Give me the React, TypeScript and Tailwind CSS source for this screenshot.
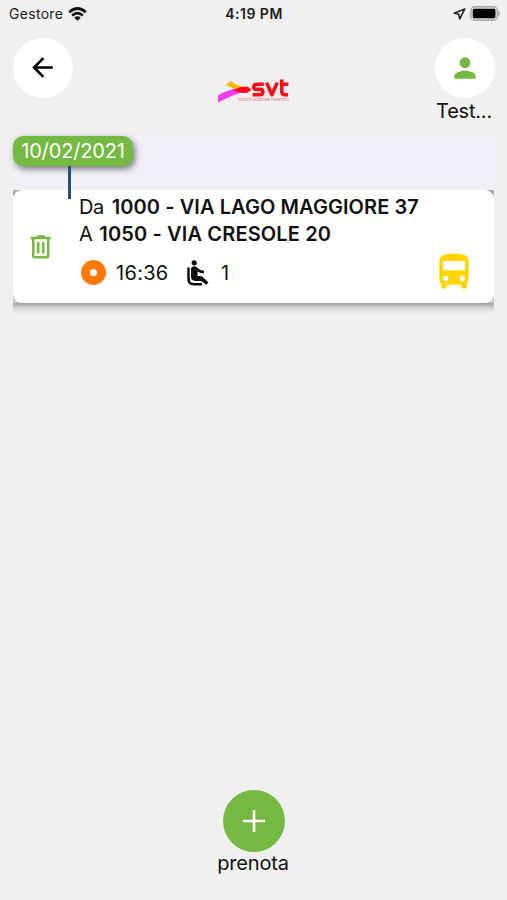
import type { ReactNode } from "react";
import { MdArrowBack, MdDirectionsBus, MdPerson } from "react-icons/md";

function WifiIcon() {
  return (
    <svg className="ml-[5px] h-[14px] w-[19px]" viewBox="0 0 19 14" fill="none" stroke="#111" strokeWidth="2.7">
      <path d="M1.2 5.3Q9.5-2.3 17.8 5.3" />
      <path d="M4.1 8.6Q9.5 3.8 14.9 8.6" />
      <path d="M6.2 10.7Q9.5 8 12.8 10.7L9.5 13.8Z" fill="#111" stroke="none" />
    </svg>
  );
}

function LocationIcon() {
  return (
    <svg className="h-[12px] w-[13px]" viewBox="0 0 13 12" fill="none" stroke="#222" strokeWidth="1.6" strokeLinejoin="round">
      <path d="M11.8 1L1.2 5.2L5.8 6.3L6.7 10.9Z" />
    </svg>
  );
}

function BatteryIcon() {
  return (
    <svg className="ml-[4px] h-[15px] w-[31px]" viewBox="0 0 31 15">
      <rect x="0.8" y="0.8" width="26.6" height="13.4" rx="4" fill="#dcdcdc" stroke="#a9a9a9" strokeWidth="1.4" />
      <rect x="2.8" y="2.8" width="22.6" height="9.4" rx="1.6" fill="#000" />
      <path d="M28.4 4.4Q31.4 7.5 28.4 10.6Z" fill="#a3a3a3" />
    </svg>
  );
}

function StatusBar() {
  return (
    <div className="grid h-7 grid-cols-3 items-center pb-px pl-[9px] pr-[6px] text-[14px] text-[#1c1c1c]">
      <div className="flex items-center">
        <span className="tracking-[0.3px]">Gestore</span>
        <WifiIcon />
      </div>
      <div className="mr-[2px] text-center text-[14px] font-semibold tracking-[0.5px]">4:19 PM</div>
      <div className="flex items-center justify-end">
        <LocationIcon />
        <BatteryIcon />
      </div>
    </div>
  );
}

function Logo() {
  return (
    <svg className="mt-[51px] h-[26px] w-[74px] overflow-visible" viewBox="0 0 74 26">
      <path d="M1 16.5Q10 10.5 23 9L31 12Q19 14 1 23.5Z" fill="#f43cf4" />
      <path d="M8.5 6L14 2Q19 7 29 8L27 13Q17 10 8.5 6Z" fill="#ffb60a" />
      <path d="M16 11Q23 7.5 30 7.6Q33.5 8.7 34.4 11Q31 14.6 25 14Q20 13 16 11Z" fill="#fb0d1b" />
      <g fill="none" stroke="#fb0d1b" strokeWidth="3.6" strokeLinejoin="round">
        <path d="M46.8 5.2H39.9Q36.8 5.2 36.8 7.9Q36.8 10.4 39.9 10.4H43Q45.9 10.4 45.9 13Q45.9 15.8 42.7 15.8H35.6" />
        <path d="M49.6 3.6L54.9 15.8L60.2 3.6" />
        <path d="M64.8 0.4V12.6Q64.8 15.8 68 15.8H71M63 5.2H71.4" />
      </g>
      <text x="21.5" y="22" textLength="50" lengthAdjust="spacingAndGlyphs" fontSize="3.7" fill="#e0525f" fontFamily="Inter, sans-serif">
        SOCIETÀ VICENTINA TRASPORTI
      </text>
    </svg>
  );
}

function RoundButton({ children }: { children: ReactNode }) {
  return <button className="flex size-[60px] items-center justify-center rounded-full bg-white">{children}</button>;
}

function Header() {
  return (
    <header className="flex h-[108px] items-start justify-between pl-[13px] pr-[12px]">
      <div className="pt-[10px]">
        <RoundButton>
          <MdArrowBack className="-mt-px mr-px size-[31px] text-black" />
        </RoundButton>
      </div>
      <Logo />
      <div className="flex w-[60px] flex-col items-center pt-[10px]">
        <RoundButton>
          <MdPerson className="-mt-px mr-px size-[32px] text-[#75b943]" />
        </RoundButton>
        <span className="mr-[2px] whitespace-nowrap text-[20px] leading-[26px] -tracking-[0.2px]">Test...</span>
      </div>
    </header>
  );
}

function TrashIcon() {
  return (
    <svg className="h-[24px] w-[22px]" viewBox="0 0 22 24" fill="none" stroke="#75b943" strokeWidth="2.5">
      <path d="M0.7 3.1H20.7M6.5 1.4H15" />
      <path d="M3.2 3.5V20.4Q3.2 22.3 5.1 22.3H16.3Q18.2 22.3 18.2 20.4V3.5" />
      <path d="M8.2 7V18.6M13.2 7V18.6" />
    </svg>
  );
}

function SeatIcon() {
  return (
    <svg className="ml-[17px] h-[26px] w-[22px]" viewBox="0 0 22 26" fill="none" stroke="#111">
      <circle cx="7.2" cy="2.8" r="2.6" fill="#111" stroke="none" />
      <path d="M1.5 7.5V19Q1.5 24.2 6.8 24.2H15" strokeWidth="2.5" />
      <path d="M4 9Q4.2 6.2 7.4 6.2Q9.3 6.3 10.3 7.6Q12.8 10.6 17 10.8V13.4Q13.2 13.3 10.6 11.4V16H13.2Q14.7 16 15.8 17L21.5 22.6L19.3 24.8L14.2 20.9H8.2Q4 20.6 4 17Z" fill="#111" stroke="none" />
    </svg>
  );
}

function TripCard() {
  return (
    <div className="bg-gradient-to-b from-[#aaaab0] to-[#c9c9ca]">
      <article className="flex h-[113px] rounded-[9px] bg-white">
        <div className="flex w-[66px] items-center pl-[17px]">
          <TrashIcon />
        </div>
        <div className="flex-1 pt-[4px]">
          <div className="h-[27px] whitespace-nowrap text-[20px] leading-[27px]">
            <span className="-tracking-[0.5px]">Da</span>
            <span className="ml-[8px] font-semibold tracking-[0.08px]">1000 - VIA LAGO MAGGIORE 37</span>
          </div>
          <div className="h-[27px] whitespace-nowrap text-[20px] leading-[27px]">
            <span className="-tracking-[0.5px]">A</span>
            <span className="ml-[7px] font-semibold tracking-[0.14px]">1050 - VIA CRESOLE 20</span>
          </div>
          <div className="flex h-[49px] items-center pl-[2px] text-[20px]">
            <span className="size-[25px] rounded-full border-[9px] border-[#ff7a00] bg-white" />
            <span className="ml-[10px] w-[54px] tracking-[0.3px]">16:36</span>
            <SeatIcon />
            <span className="ml-[12px]">1</span>
          </div>
        </div>
        <div className="flex w-[62px] items-end pb-[9px]">
          <MdDirectionsBus className="size-[44px] text-[#ffd500]" />
        </div>
      </article>
    </div>
  );
}

function Bookings() {
  return (
    <section className="mx-[13px] h-[178px]">
      <div className="h-[54px] bg-[#f0f0f5]">
        <div className="relative h-[30px] w-[120px]">
          <div className="flex h-[30px] items-center justify-center rounded-[10px] bg-[#75b943] text-[20px] -tracking-[0.15px] text-white shadow-[2px_3px_6px_rgba(0,0,0,0.5)]">
            10/02/2021
          </div>
          <span className="absolute left-[55px] top-[30px] h-[33px] w-[2.5px] bg-[#244d80]" />
        </div>
      </div>
      <TripCard />
      <div className="h-[10px] bg-gradient-to-b from-[#a2a2a2] via-[#d6d6d6] to-[#ececec]" />
    </section>
  );
}

function BookButton() {
  return (
    <footer className="mt-auto flex flex-col items-center pb-[26px]">
      <button className="flex size-[62px] items-center justify-center rounded-full bg-[#75b943]">
        <svg className="size-[22px]" viewBox="0 0 22 22" stroke="white" strokeWidth="2.6">
          <path d="M11 0V22M0 11H22" />
        </svg>
      </button>
      <span className="mr-px text-[20px] leading-[22px] -tracking-[0.2px]">prenota</span>
    </footer>
  );
}

export default function App() {
  return (
    <main className="flex h-[900px] w-[507px] flex-col overflow-hidden bg-[#f0f0f0] font-['Inter','Liberation_Sans',sans-serif] text-[#111]">
      <StatusBar />
      <Header />
      <Bookings />
      <BookButton />
    </main>
  );
}
